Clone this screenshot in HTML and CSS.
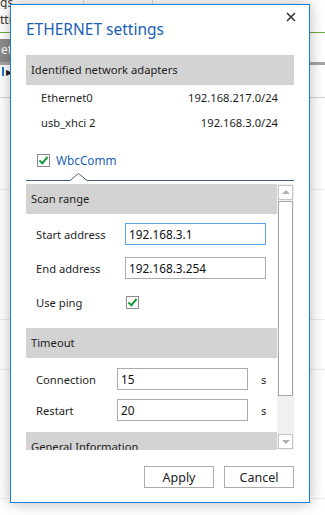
FILE: index.html
```html
<!DOCTYPE html>
<html lang="en">

<head>
  <meta charset="UTF-8" />
  <meta name="viewport" content="width=device-width, initial-scale=1.0" />
  <title>ETHERNET settings</title>
  <link rel="stylesheet" href="styles.css">
</head>

<body>
  <!-- page behind the dialog -->
  <div class="backdrop">
    <div class="bg-head"><span>gs</span><i class="col c1"></i><i class="col c2"></i></div>
    <div class="bg-row"><span>tti</span></div>
    <div class="bg-green"></div>
    <div class="bg-tab"><span>etw</span></div>
    <div class="bg-tabline"></div>
    <div class="bg-tool"><b></b><span>&#9654;</span></div>
    <div class="bg-line l1"></div>
    <div class="bg-line l2"></div>
    <div class="bg-line l3"></div>
    <div class="bg-line l4"></div>
    <div class="bg-line l5"></div>
  </div>

  <section class="dialog">
    <div class="dlg-title">
      <h1>ETHERNET settings</h1>
      <svg class="close" width="10" height="10" viewBox="0 0 10 10">
        <path d="M1 1 L9 9 M9 1 L1 9" stroke="#333" stroke-width="1.6" />
      </svg>
    </div>

    <div class="group-head">Identified network adapters</div>
    <div class="adapter"><span>Ethernet0</span><span>192.168.217.0/24</span></div>
    <div class="adapter"><span>usb_xhci 2</span><span>192.168.3.0/24</span></div>

    <div class="tab">
      <span class="check on"></span>
      <span class="tab-name">WbcComm</span>
    </div>
    <svg class="tab-line" width="268" height="9" viewBox="0 0 268 9">
      <path d="M0 8.5 H44 L52.5 1.5 L61 8.5 H268" fill="none" stroke="#4a5a72" stroke-width="1" />
    </svg>

    <div class="scroller">
      <div class="scroll-body">
        <div class="group-head">Scan range</div>
        <div class="fields scan">
          <div class="field">
            <label>Start address</label>
            <input class="focus" value="192.168.3.1" />
          </div>
          <div class="field">
            <label>End address</label>
            <input value="192.168.3.254" />
          </div>
          <div class="field">
            <label>Use ping</label>
            <span class="check on"></span>
          </div>
        </div>

        <div class="group-head">Timeout</div>
        <div class="fields timeout">
          <div class="field">
            <label>Connection</label>
            <input value="15" />
            <span class="unit">s</span>
          </div>
          <div class="field">
            <label>Restart</label>
            <input value="20" />
            <span class="unit">s</span>
          </div>
        </div>

        <div class="group-head">General Information</div>
      </div>
      <div class="scrollbar">
        <span class="arrow up"></span>
        <span class="thumb"></span>
        <span class="arrow down"></span>
      </div>
    </div>

    <div class="buttons">
      <button>Apply</button>
      <button>Cancel</button>
    </div>
  </section>
</body>

</html>
```

FILE: styles.css
```css
html,
body {
  margin: 0;
  height: 100%;
  overflow: hidden;
}

body {
  position: relative;
  background: #fff;
  font-family: "Segoe UI", "Noto Sans", "DejaVu Sans", sans-serif;
  font-size: 11.2px;
  color: #1e1e1e;
}

/* background page */
.backdrop {
  height: 100%;
}

.bg-head {
  height: 9px;
  position: relative;
  font-size: 12px;
  line-height: 6px;
  color: #333;
  overflow: hidden;
}

.bg-head .col {
  position: absolute;
  top: 0;
  width: 1px;
  height: 5px;
  background: #d9d9d9;
}

.c1 {
  left: 83px;
}

.c2 {
  left: 152px;
}

.bg-row {
  height: 23px;
  line-height: 22px;
  font-size: 12px;
  color: #333;
}

.bg-green {
  height: 1px;
  background: #6aab3c;
  margin-bottom: 6px;
}

.bg-tab {
  width: 40px;
  height: 23px;
  background: #8c8c8c;
  color: #fff;
  font-size: 12px;
  line-height: 22px;
  padding-left: 1px;
}

.bg-tabline {
  height: 3px;
  background: #a6a6a6;
}

.bg-tool {
  display: flex;
  align-items: center;
  gap: 2px;
  height: 12px;
  font-size: 8px;
  color: #222;
}

.bg-tool b {
  width: 2px;
  height: 9px;
  background: #1f73c7;
  margin-left: 2px;
}

.bg-line {
  height: 1px;
  background: #d4d4d4;
}

.l1 {
  margin-top: 20px;
}

.l2 {
  margin-top: 91px;
  background: #ececec;
}

.l3 {
  margin-top: 129px;
  background: #ececec;
}

.l4 {
  margin-top: 49px;
  background: #ececec;
}

.l5 {
  margin-top: 128px;
  background: #ececec;
}

/* dialog */
.dialog {
  position: absolute;
  left: 10px;
  top: 4px;
  width: 268px;
  height: 497px;
  padding: 0 15px;
  background: #fff;
  border: 1px solid #1a7fd4;
  box-shadow: 0 0 14px rgba(0, 0, 0, 0.28);
  display: flex;
  flex-direction: column;
}

.dlg-title {
  display: flex;
  justify-content: space-between;
  align-items: flex-start;
  height: 50px;
}

.dlg-title h1 {
  margin: 13px 0 0;
  font-size: 15.5px;
  font-weight: normal;
  color: #1a5fb4;
}

.close {
  margin: 7px -2px 0 0;
}

.group-head {
  height: 30px;
  line-height: 30px;
  padding-left: 5px;
  background: #d3d3d3;
  color: #222;
  flex: none;
}

.adapter {
  display: flex;
  justify-content: space-between;
  height: 25px;
  line-height: 25px;
  padding: 0 16px 0 15px;
}

.adapter:first-of-type {
  margin-top: 3px;
}

.tab {
  display: flex;
  align-items: center;
  gap: 6px;
  margin: 16px 0 0 11px;
  height: 18px;
}

.tab-name {
  color: #1a5fb4;
  font-size: 11.8px;
}

.check {
  width: 11px;
  height: 11px;
  border: 1px solid #8c8c8c;
  background: #fff;
  position: relative;
  flex: none;
}

.check.on::after {
  content: "";
  position: absolute;
  left: 3px;
  top: 0;
  width: 3px;
  height: 7px;
  border: solid #1c9a3a;
  border-width: 0 2px 2px 0;
  transform: rotate(40deg);
}

.tab-line {
  display: block;
  margin-top: 3px;
}

.scroller {
  display: flex;
  height: 266px;
  margin-top: 3px;
  overflow: hidden;
}

.scroll-body {
  width: 251px;
  overflow: hidden;
}

.fields {
  display: flex;
  flex-direction: column;
}

.scan {
  padding: 9px 0 15px;
  gap: 12px;
}

.timeout {
  padding: 10px 0 11px;
  gap: 9px;
}

.field {
  display: flex;
  align-items: center;
  height: 22px;
  padding-left: 10px;
}

.field label {
  flex: none;
}

.scan label {
  width: 89px;
}

.timeout label {
  width: 81px;
}

.field input {
  box-sizing: border-box;
  height: 22px;
  margin: 0;
  padding: 0 3px;
  border: 1px solid #ababab;
  font: inherit;
  font-size: 11.8px;
  color: #111;
  outline: none;
}

.scan input {
  width: 141px;
}

.timeout input {
  width: 131px;
}

.field input.focus {
  border-color: #5aa0e6;
}

.scan .check {
  margin-left: 1px;
}

.unit {
  margin-left: 13px;
}

.scrollbar {
  width: 17px;
  background: #f0f0f0;
  display: flex;
  flex-direction: column;
  align-items: center;
  padding-top: 1px;
}

.arrow {
  box-sizing: border-box;
  width: 15px;
  height: 15px;
  border: 1px solid #c4c4c4;
  background: #fff;
  position: relative;
  flex: none;
}

.arrow::after {
  content: "";
  position: absolute;
  left: 3px;
  border-left: 4px solid transparent;
  border-right: 4px solid transparent;
}

.up::after {
  top: 4px;
  border-bottom: 4px solid #b0b0b0;
}

.down::after {
  top: 5px;
  border-top: 4px solid #b0b0b0;
}

.thumb {
  box-sizing: border-box;
  width: 15px;
  height: 195px;
  margin: 1px 0 38px;
  border: 1px solid #a8a8a8;
  background: #fff;
  flex: none;
}

.buttons {
  display: flex;
  justify-content: flex-end;
  gap: 10px;
  margin-top: 16px;
}

.buttons button {
  width: 70px;
  height: 22px;
  padding: 0;
  border: 1px solid #adadad;
  background: #fff;
  font: inherit;
  font-size: 12.5px;
  color: #222;
}
```
